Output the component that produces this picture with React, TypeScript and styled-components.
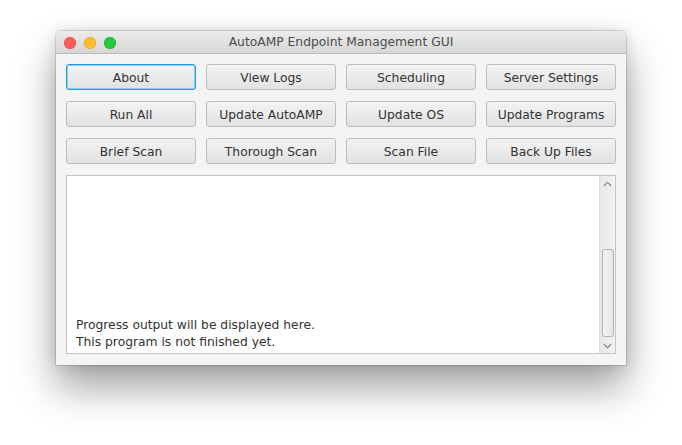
import React from "react";
import styled, { createGlobalStyle } from "styled-components";

const Global = createGlobalStyle`
  html, body { margin: 0; padding: 0; background: #ffffff; }
  body { width: 682px; height: 445px; overflow: hidden; font-family: "DejaVu Sans", "Liberation Sans", sans-serif; }
`;

const Stage = styled.div`
  display: flex;
  padding: 31px 0 0 56px;
`;

const Window = styled.div`
  width: 570px;
  height: 334px;
  display: flex;
  flex-direction: column;
  background: #f4f4f4;
  border-radius: 5px 5px 0 0;
  box-shadow: 0 0 0 1px rgba(0,0,0,0.12), 0 22px 40px rgba(0,0,0,0.38), 0 0 14px rgba(0,0,0,0.12);
  overflow: hidden;
`;

const TitleBar = styled.div`
  height: 22px;
  flex: none;
  display: flex;
  align-items: center;
  position: relative;
  background: linear-gradient(#ececec, #d6d6d6);
  border-bottom: 1px solid #b9b9b9;
`;

const Lights = styled.div`
  display: flex;
  gap: 8px;
  padding: 1px 0 0 8px;
`;

const Light = styled.span<{ $c: string; $b: string }>`
  width: 12px;
  height: 12px;
  border-radius: 50%;
  background: ${(p) => p.$c};
  box-shadow: inset 0 0 0 0.5px ${(p) => p.$b};
`;

const Title = styled.div`
  position: absolute;
  left: 0;
  right: 0;
  top: 4px;
  text-align: center;
  font-size: 12.3px;
  color: #4c4c4c;
  pointer-events: none;
`;

const Content = styled.div`
  flex: 1;
  display: flex;
  flex-direction: column;
  gap: 11px;
  padding: 10px 10px 11px 10px;
`;

const Grid = styled.div`
  display: grid;
  grid-template-columns: repeat(4, 130px);
  grid-auto-rows: 26px;
  column-gap: 10px;
  row-gap: 11px;
`;

const Button = styled.button<{ $focused?: boolean }>`
  margin: 0;
  padding: 2px 0 0 0;
  font-family: "DejaVu Sans", "Liberation Sans", sans-serif;
  font-size: 12.3px;
  color: #333333;
  border-radius: 3px;
  border: 1px solid ${(p) => (p.$focused ? "#1e9ad6" : "#bdbdbd")};
  box-shadow: ${(p) => (p.$focused ? "inset 0 0 0 1px #8fd0f0" : "none")};
  background: linear-gradient(#f3f3f3, #e2e2e2);
`;

const TextArea = styled.div`
  flex: 1;
  display: flex;
  background: #ffffff;
  border: 1px solid #c6c6c6;
`;

const Output = styled.div`
  flex: 1;
  display: flex;
  flex-direction: column;
  justify-content: flex-end;
  padding: 0 0 2px 9px;
  font-size: 12.3px;
  line-height: 17px;
  color: #333333;
`;

const ScrollBar = styled.div`
  width: 15px;
  flex: none;
  display: flex;
  flex-direction: column;
  align-items: center;
  background: linear-gradient(90deg, #e8e8e8, #f2f2f2);
  border-left: 1px solid #dcdcdc;
`;

const Arrow = styled.div`
  height: 15px;
  flex: none;
  display: flex;
  align-items: center;
  justify-content: center;
`;

const Track = styled.div`
  flex: 1;
  width: 100%;
  display: flex;
  flex-direction: column;
  justify-content: flex-end;
  align-items: center;
`;

const Thumb = styled.div`
  width: 10px;
  height: 86px;
  margin-bottom: 1px;
  border: 1px solid #b2b2b2;
  border-radius: 3px;
  background: linear-gradient(90deg, #f4f4f4, #e4e4e4);
`;

const Chevron = ({ up }: { up?: boolean }) => (
  <svg width="9" height="6" viewBox="0 0 9 6">
    <path
      d={up ? "M0.8 5 L4.5 1.3 L8.2 5" : "M0.8 1 L4.5 4.7 L8.2 1"}
      fill="none"
      stroke="#8a8a8a"
      strokeWidth="1.2"
    />
  </svg>
);

const labels = [
  "About",
  "View Logs",
  "Scheduling",
  "Server Settings",
  "Run All",
  "Update AutoAMP",
  "Update OS",
  "Update Programs",
  "Brief Scan",
  "Thorough Scan",
  "Scan File",
  "Back Up Files",
];

export default function App() {
  return (
    <>
      <Global />
      <Stage>
        <Window>
          <TitleBar>
            <Lights>
              <Light $c="#fc5f57" $b="#e0443e" />
              <Light $c="#fdbc2e" $b="#dea123" />
              <Light $c="#28c840" $b="#1aab29" />
            </Lights>
            <Title>AutoAMP Endpoint Management GUI</Title>
          </TitleBar>
          <Content>
            <Grid>
              {labels.map((l, i) => (
                <Button key={l} $focused={i === 0}>
                  {l}
                </Button>
              ))}
            </Grid>
            <TextArea>
              <Output>
                <div>Progress output will be displayed here.</div>
                <div>This program is not finished yet.</div>
              </Output>
              <ScrollBar>
                <Arrow>
                  <Chevron up />
                </Arrow>
                <Track>
                  <Thumb />
                </Track>
                <Arrow>
                  <Chevron />
                </Arrow>
              </ScrollBar>
            </TextArea>
          </Content>
        </Window>
      </Stage>
    </>
  );
}
